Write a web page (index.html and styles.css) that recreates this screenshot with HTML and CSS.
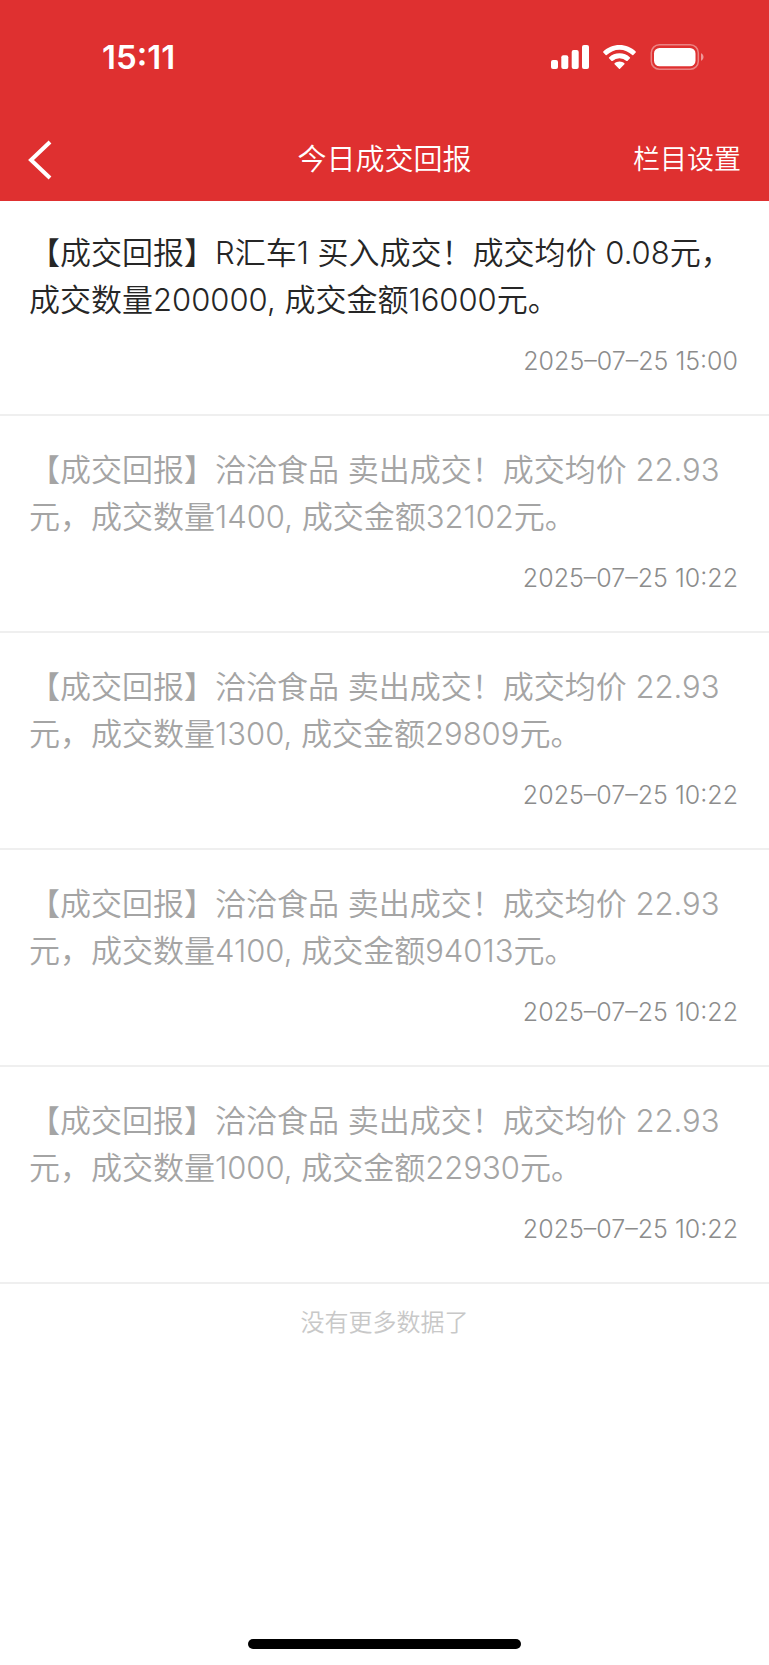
FILE: index.html
```html
<!DOCTYPE html>
<html lang="zh-CN">
<head>
    <meta charset="UTF-8">
    <meta name="viewport" content="width=device-width, initial-scale=1.0">
    <title>今日成交回报</title>
    <link rel="stylesheet" href="styles.css">
</head>
<body>

    <header class="header">
        <div class="status-bar">
            <span class="time">15:11</span>
            <div class="status-icons">
                <svg width="38" height="24" viewBox="0 0 38 24" fill="#fff">
                    <rect x="0" y="15" width="7" height="9" rx="2"/>
                    <rect x="10.3" y="10.3" width="7" height="13.7" rx="2"/>
                    <rect x="20.7" y="5" width="7" height="19" rx="2"/>
                    <rect x="31" y="0" width="7" height="24" rx="2"/>
                </svg>
                <svg width="33" height="24" viewBox="0 0 33 24" fill="#fff">
                    <path d="M16.5 0C10.2 0 4.4 2.5.3 6.5Q-.1 7 .3 7.5L2.7 10Q3.2 10.4 3.7 10A18.3 18.3 0 0 1 29.3 10Q29.8 10.4 30.3 10L32.7 7.5Q33.1 7 32.7 6.5C28.6 2.5 22.8 0 16.5 0Z"/>
                    <path d="M16.5 8.3C12.5 8.3 8.8 9.8 6 12.4Q5.6 12.9 6 13.3L8.6 15.9Q9 16.3 9.5 15.9A10.3 10.3 0 0 1 23.5 15.9Q24 16.3 24.4 15.9L27 13.3Q27.4 12.9 27 12.4C24.2 9.8 20.5 8.3 16.5 8.3Z"/>
                    <path d="M16.5 16.5C14.6 16.5 12.9 17.2 11.6 18.3Q11.2 18.8 11.6 19.2L16 23.7Q16.5 24.2 17 23.7L21.4 19.2Q21.8 18.8 21.4 18.3C20.1 17.2 18.4 16.5 16.5 16.5Z"/>
                </svg>
                <svg width="54" height="26" viewBox="0 0 54 26" fill="#fff">
                    <rect x="1.3" y=".8" width="47" height="24.4" rx="8" fill="none" stroke="#fff" stroke-opacity=".4" stroke-width="1.5"/>
                    <rect x="4" y="4" width="41.5" height="18.3" rx="5.5"/>
                    <path d="M51 9.2V16.8C52.500 16.2 53.500 14.7 53.500 13S52.500 9.8 51 9.2Z" fill-opacity=".5"/>
                </svg>
            </div>
        </div>
        <nav class="nav">
            <button type="button" class="back-btn" aria-label="返回">
                <svg width="25" height="40" viewBox="0 0 25 40" fill="none" stroke="#fff" stroke-width="4">
                    <path d="M22 2L3 20L22 38"/>
                </svg>
            </button>
            <h1 class="title">今日成交回报</h1>
            <button type="button" class="setting-btn">栏目设置</button>
        </nav>
    </header>

    <main>
        <ul class="list">
            <li class="item unread">
                <p class="text">【成交回报】R汇车1 买入成交！成交均价 0.08元，成交数量200000, 成交金额16000元。</p>
                <time class="date">2025–07–25 15:00</time>
            </li>
            <li class="item">
                <p class="text">【成交回报】洽洽食品 卖出成交！成交均价 22.93元，成交数量1400, 成交金额32102元。</p>
                <time class="date">2025–07–25 10:22</time>
            </li>
            <li class="item">
                <p class="text">【成交回报】洽洽食品 卖出成交！成交均价 22.93元，成交数量1300, 成交金额29809元。</p>
                <time class="date">2025–07–25 10:22</time>
            </li>
            <li class="item">
                <p class="text">【成交回报】洽洽食品 卖出成交！成交均价 22.93元，成交数量4100, 成交金额94013元。</p>
                <time class="date">2025–07–25 10:22</time>
            </li>
            <li class="item">
                <p class="text">【成交回报】洽洽食品 卖出成交！成交均价 22.93元，成交数量1000, 成交金额22930元。</p>
                <time class="date">2025–07–25 10:22</time>
            </li>
        </ul>
        <p class="no-more">没有更多数据了</p>
    </main>

    <div class="home-bar"></div>

</body>
</html>
```
FILE: styles.css
```css
* {
    box-sizing: border-box;
}
body {
    margin: 0;
    min-height: 100vh;
    display: flex;
    flex-direction: column;
    font-family: Inter, "Noto Sans CJK SC", sans-serif;
    font-weight: 300;
    background: #fff;
    color: #2b2b2b;
}
h1, p, ul {
    margin: 0;
    padding: 0;
}
button {
    padding: 0;
    border: none;
    background: none;
    color: inherit;
    font: inherit;
    cursor: pointer;
}
svg {
    display: block;
}

/* header */
.header {
    background: #df3030;
    color: #fff;
}
.status-bar {
    display: flex;
    justify-content: space-between;
    align-items: center;
    height: 118px;
    padding: 0 65px 4px 102px;
}
.time {
    font-size: 33px;
    font-weight: 600;
}
.status-icons {
    display: flex;
    align-items: center;
    gap: 14px;
}
.nav {
    display: grid;
    grid-template-columns: 1fr auto 1fr;
    align-items: center;
    height: 83px;
    padding: 0 28px;
}
.back-btn {
    justify-self: start;
}
.title {
    font-size: 29px;
    font-weight: 350;
    line-height: 40px;
}
.setting-btn {
    justify-self: end;
    font-size: 27px;
    font-weight: 350;
    line-height: 40px;
}

/* message list */
.list {
    list-style: none;
}
.item {
    padding: 30px 29px 36px;
    border-bottom: 2px solid #efefef;
    color: #a4a4a4;
}
.item:first-child {
    padding-top: 28px;
}
.unread {
    color: #262626;
}
.text {
    font-size: 31px;
    font-weight: 350;
    line-height: 47px;
}
.date {
    display: block;
    margin-top: 21px;
    padding-right: 2px;
    font-size: 25px;
    line-height: 34px;
    text-align: right;
    color: #8c8c8c;
}
.no-more {
    padding: 22px 0;
    font-size: 24px;
    font-weight: 350;
    line-height: 34px;
    text-align: center;
    color: #c8c8c8;
}

.home-bar {
    width: 273px;
    height: 10px;
    margin: auto auto 16px;
    border-radius: 5px;
    background: #000;
}
```
